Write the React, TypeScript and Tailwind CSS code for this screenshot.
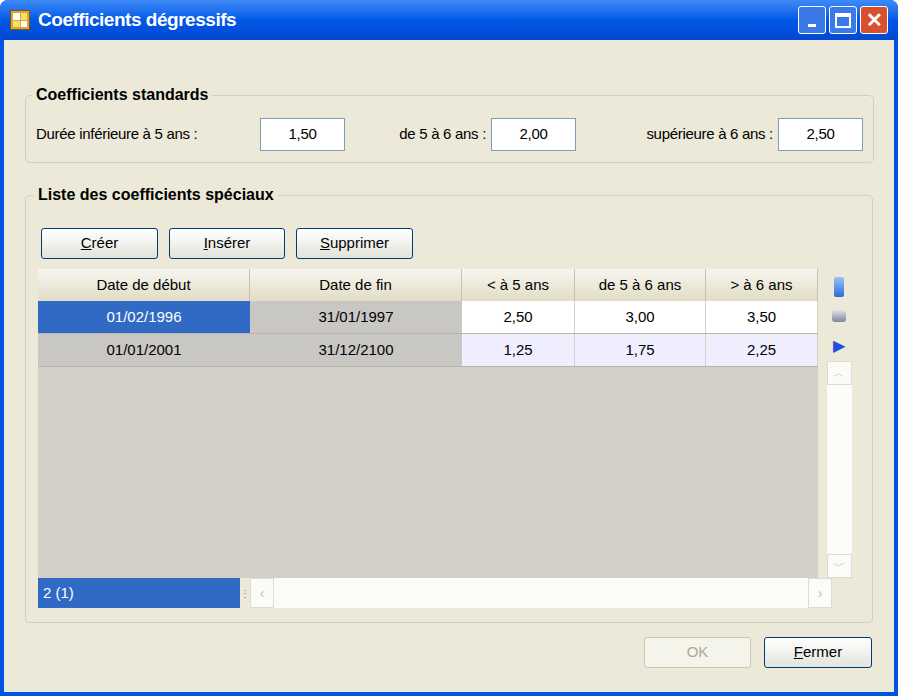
import React from "react";

const U = ({ c, rest }: { c: string; rest: string }) => (
  <span><span className="underline">{c}</span>{rest}</span>
);

function Btn({ children, w, disabled }: { children: React.ReactNode; w: string; disabled?: boolean }) {
  return (
    <div className={`${w} h-[31px] flex items-center justify-center rounded-[3px] border ${disabled ? "border-[#c9c7ba] text-[#aca899] bg-[#f5f4ea]" : "border-[#003c74] bg-gradient-to-b from-white to-[#e3e3db] text-black"} text-[15px]`}>
      {children}
    </div>
  );
}

function Field({ v }: { v: string }) {
  return (
    <div className="w-[85px] h-[33px] border border-[#7f9db9] bg-white flex items-center justify-center text-[15px] shrink-0">{v}</div>
  );
}

export default function App() {
  const rows = [
    ["01/02/1996", "31/01/1997", "2,50", "3,00", "3,50"],
    ["01/01/2001", "31/12/2100", "1,25", "1,75", "2,25"],
  ];
  const widths = ["w-[212px]", "w-[212px]", "w-[113px]", "w-[131px]", "w-[112px]"];
  return (
    <div className="w-[898px] h-[696px] bg-[#0054e3] rounded-t-[8px] flex flex-col overflow-hidden" style={{ fontFamily: "'Liberation Sans', Arial, sans-serif" }}>
      <div className="h-[40px] flex items-center px-[10px] bg-gradient-to-b from-[#3d8af7] via-[#0058e6] to-[#0348d0] shrink-0">
        <div className="w-[20px] h-[20px] bg-[#d9a73a] border border-[#7a5a10] mr-[8px] grid grid-cols-2 gap-[1px] p-[2px]">
          <div className="bg-white" /><div className="bg-[#f8e060]" /><div className="bg-[#f8e060]" /><div className="bg-white" />
        </div>
        <div className="text-white font-bold text-[19px] flex-1 tracking-tight">Coefficients dégressifs</div>
        <div className="flex gap-[3px]">
          <div className="w-[28px] h-[28px] rounded-[3px] border border-white bg-[#3b78e8] flex items-end justify-center pb-[6px]"><div className="w-[8px] h-[3px] bg-white" /></div>
          <div className="w-[28px] h-[28px] rounded-[3px] border border-white bg-[#3b78e8] flex items-center justify-center"><div className="w-[16px] h-[15px] border-2 border-white border-t-[4px]" /></div>
          <div className="w-[28px] h-[28px] rounded-[3px] border border-white bg-[#d9502f] flex items-center justify-center text-white font-bold text-[20px]">✕</div>
        </div>
      </div>
      <div className="flex-1 bg-[#ece9d8] mx-[4px] mb-[4px] relative px-[21px] pt-[43px] text-[15px] text-black">
        <fieldset className="border border-[#d0d0bf] rounded-[5px] h-[80px] px-[10px] pt-[11px]">
          <legend className="font-bold text-[16px] px-[4px] ml-[-4px]">Coefficients standards</legend>
          <div className="flex items-center tracking-[-0.3px]">
            <span className="w-[224px] shrink-0">Durée inférieure à 5 ans :</span>
            <Field v="1,50" />
            <span className="w-[146px] shrink-0 text-right pr-[5px]">de 5 à 6 ans :</span>
            <Field v="2,00" />
            <span className="w-[202px] shrink-0 text-right pr-[5px]">supérieure à 6 ans :</span>
            <Field v="2,50" />
          </div>
        </fieldset>
        <fieldset className="border border-[#d0d0bf] rounded-[5px] mt-[20px] h-[440px] px-[12px] pt-[21px]">
          <legend className="font-bold text-[16px] px-[4px] ml-[-4px]">Liste des coefficients spéciaux</legend>
          <div className="flex gap-[11px] ml-[3px]">
            <Btn w="w-[117px]"><U c="C" rest="réer" /></Btn>
            <Btn w="w-[116px]"><U c="I" rest="nsérer" /></Btn>
            <Btn w="w-[117px]"><U c="S" rest="upprimer" /></Btn>
          </div>
          <div className="mt-[10px] w-[822px] h-[339px] bg-[#d4d0c8] flex flex-col">
            <div className="flex flex-1">
              <div className="flex flex-col">
                <div className="flex h-[32px]">
                  {["Date de début", "Date de fin", "< à 5 ans", "de 5 à 6 ans", "> à 6 ans"].map((h, i) => (
                    <div key={i} className={`${widths[i]} flex items-center justify-center border-r border-[#c7c2ae] bg-gradient-to-b from-[#f7f6f0] to-[#e2dcc6]`}>{h}</div>
                  ))}
                </div>
                {rows.map((r, ri) => (
                  <div key={ri} className="flex h-[33px] border-b border-[#b8b4aa]">
                    {r.map((c, ci) => {
                      let cls = "bg-[#c9c7c4]";
                      if (ci === 0 && ri === 0) cls = "bg-[#316ac5] text-white";
                      else if (ci >= 2) cls = ri === 0 ? "bg-white border-r border-[#d4d0c8]" : "bg-[#eeeeff] border-r border-[#d4d0c8]";
                      return <div key={ci} className={`${widths[ci]} flex items-center justify-center ${cls}`}>{c}</div>;
                    })}
                  </div>
                ))}
              </div>
              <div className="flex-1 flex flex-col items-center pt-[4px] bg-[#ece9d8]">
                <div className="h-[28px] flex items-center"><div className="w-[10px] h-[20px] rounded-[2px] bg-gradient-to-b from-[#9cc3f5] to-[#2a6ad8]" /></div>
                <div className="h-[30px] flex items-center"><div className="w-[14px] h-[12px] rounded-[3px] bg-gradient-to-b from-[#dfe3ea] to-[#7e8796]" /></div>
                <div className="h-[30px] flex items-center text-[#2050e0] text-[16px]">▶</div>
                <div className="w-[25px] flex-1 bg-[#fbfbf8] flex flex-col justify-between">
                  <div className="h-[24px] border border-[#dcdcd4] flex items-center justify-center text-[#b9c6dc] text-[12px]">︿</div>
                  <div className="h-[24px] border border-[#dcdcd4] flex items-center justify-center text-[#b9c6dc] text-[12px]">﹀</div>
                </div>
              </div>
            </div>
            <div className="h-[30px] flex items-center bg-[#ece9d8]">
              <div className="w-[202px] h-full bg-[#316ac5] text-white flex items-center pl-[5px]">2 (1)</div>
              <div className="w-[10px] text-[#7d7d7d] text-[10px] text-center">⋮</div>
              <div className="w-[582px] h-full bg-[#fbfbf8] flex justify-between">
                <div className="w-[24px] border border-[#dcdcd4] flex items-center justify-center text-[#b9c6dc]">‹</div>
                <div className="w-[24px] border border-[#dcdcd4] flex items-center justify-center text-[#b9c6dc]">›</div>
              </div>
            </div>
          </div>
        </fieldset>
        <div className="flex justify-end gap-[13px] mt-[14px] mr-[1px]">
          <Btn w="w-[107px]" disabled>OK</Btn>
          <Btn w="w-[108px]"><U c="F" rest="ermer" /></Btn>
        </div>
      </div>
    </div>
  );
}
